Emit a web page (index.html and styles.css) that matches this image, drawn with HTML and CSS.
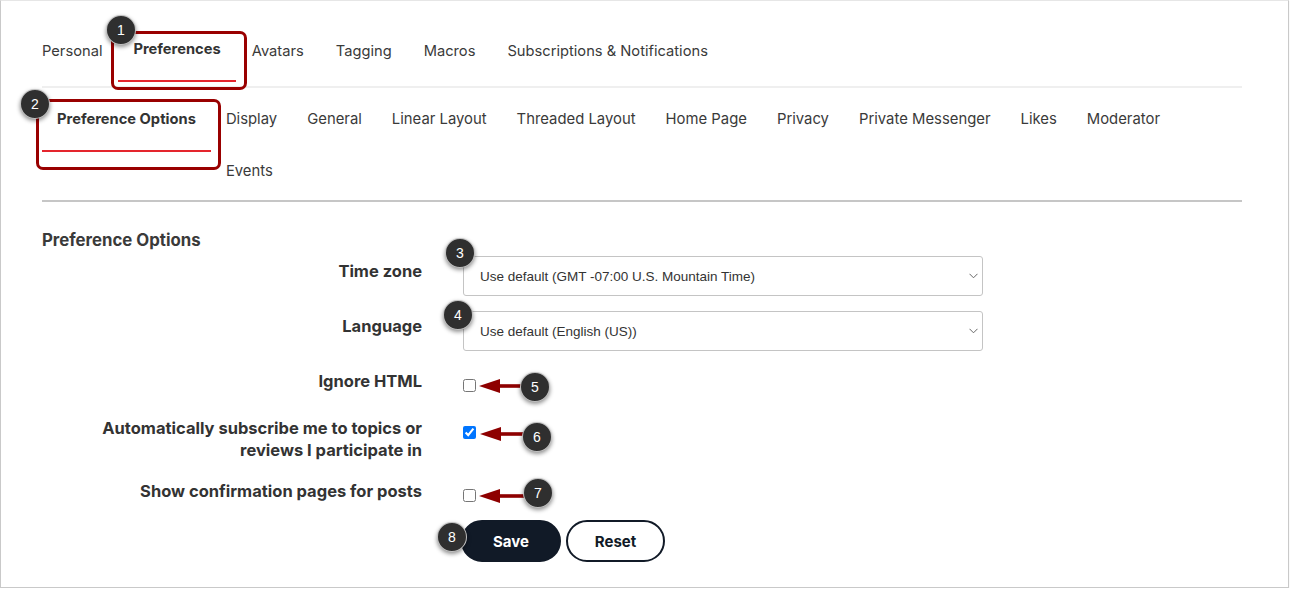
FILE: index.html
```html
<!DOCTYPE html>
<html lang="en">
<head>
    <meta charset="UTF-8">
    <meta name="viewport" content="width=device-width, initial-scale=1.0">
    <title>Preferences</title>
    <link rel="stylesheet" href="styles.css">
</head>
<body>
<div class="frame">
    <ul class="tabs-main">
        <li class="tab">Personal</li>
        <li class="tab active">Preferences</li>
        <li class="tab">Avatars</li>
        <li class="tab">Tagging</li>
        <li class="tab">Macros</li>
        <li class="tab">Subscriptions &amp; Notifications</li>
    </ul>

    <div class="tabs-sub">
        <div class="sub-tab active">Preference Options</div>
        <ul class="sub-list">
            <li class="sub-tab">Display</li>
            <li class="sub-tab">General</li>
            <li class="sub-tab">Linear Layout</li>
            <li class="sub-tab">Threaded Layout</li>
            <li class="sub-tab">Home Page</li>
            <li class="sub-tab">Privacy</li>
            <li class="sub-tab">Private Messenger</li>
            <li class="sub-tab">Likes</li>
            <li class="sub-tab">Moderator</li>
            <li class="break"></li>
            <li class="sub-tab">Events</li>
        </ul>
    </div>

    <h3 class="section-title">Preference Options</h3>

    <div class="form-row">
        <label class="form-label" for="timezone">Time zone</label>
        <div class="select-wrap">
            <select id="timezone">
                <option>Use default (GMT -07:00 U.S. Mountain Time)</option>
            </select>
            <svg class="chevron" width="9" height="6" viewBox="0 0 9 6"><path d="M0.5 0.8 L4.5 4.8 L8.5 0.8" fill="none" stroke="#666" stroke-width="1"/></svg>
        </div>
    </div>

    <div class="form-row">
        <label class="form-label" for="language">Language</label>
        <div class="select-wrap">
            <select id="language">
                <option>Use default (English (US))</option>
            </select>
            <svg class="chevron" width="9" height="6" viewBox="0 0 9 6"><path d="M0.5 0.8 L4.5 4.8 L8.5 0.8" fill="none" stroke="#666" stroke-width="1"/></svg>
        </div>
    </div>

    <div class="form-row check-row">
        <label class="form-label" for="ignoreHtml">Ignore HTML</label>
        <div><input type="checkbox" id="ignoreHtml"></div>
    </div>

    <div class="form-row check-row">
        <label class="form-label" for="autoSub">Automatically subscribe me to topics or<br>reviews I participate in</label>
        <div><input type="checkbox" id="autoSub" checked></div>
    </div>

    <div class="form-row check-row">
        <label class="form-label" for="confirmPages">Show confirmation pages for posts</label>
        <div><input type="checkbox" id="confirmPages"></div>
    </div>

    <div class="form-actions">
        <button class="btn btn-save">Save</button>
        <button class="btn btn-reset">Reset</button>
    </div>

    <!-- callouts -->
    <div class="callout-box box1"></div>
    <div class="callout-box box2"></div>

    <svg class="arrow arrow5" width="52" height="16" viewBox="0 0 52 16"><polygon points="0,8 21,1 21,15"/><rect x="19" y="6.2" width="33" height="3.6"/></svg>
    <svg class="arrow arrow6" width="52" height="16" viewBox="0 0 52 16"><polygon points="0,8 21,1 21,15"/><rect x="19" y="6.2" width="33" height="3.6"/></svg>
    <svg class="arrow arrow7" width="52" height="16" viewBox="0 0 52 16"><polygon points="0,8 21,1 21,15"/><rect x="19" y="6.2" width="33" height="3.6"/></svg>

    <div class="marker m1">1</div>
    <div class="marker m2">2</div>
    <div class="marker m3">3</div>
    <div class="marker m4">4</div>
    <div class="marker m5">5</div>
    <div class="marker m6">6</div>
    <div class="marker m7">7</div>
    <div class="marker m8">8</div>
</div>
</body>
</html>
```

FILE: styles.css
```css
body {
    margin: 0;
    padding: 0;
    background-color: #fff;
    font-family: Inter, Lato, Arial, sans-serif;
    color: #3a3a3a;
}

.frame {
    position: relative;
    box-sizing: border-box;
    width: 1289px;
    height: 588px;
    padding: 0 46px 0 41px;
    border: 1px solid #c9c9c9;
    border-top-color: #e6e6e6;
    box-shadow: 0 1px 1px rgba(0, 0, 0, 0.12);
    overflow: hidden;
}

/* top tabs */
.tabs-main {
    display: flex;
    list-style: none;
    margin: 0;
    padding: 40px 0 4px;
    border-bottom: 2px solid #efefef;
}

.tab {
    padding: 0 16px 19px;
    font-size: 14.7px;
    line-height: 20px;
    border-bottom: 2px solid transparent;
}

.tab:first-child {
    padding-left: 0;
}

.tab.active,
.sub-tab.active {
    font-weight: 700;
    color: #333;
    border-bottom: 2px solid #e4252d;
}

.tab.active {
    margin-top: -2px;
    padding: 0 15px 21px;
}

/* second level tabs */
.tabs-sub {
    display: flex;
    align-items: flex-start;
    padding-bottom: 8px;
    border-bottom: 2px solid #c6c6c6;
}

.sub-list {
    display: flex;
    flex-wrap: wrap;
    flex: 1;
    list-style: none;
    margin: 0;
    padding: 0;
}

.sub-tab {
    padding: 21px 15px 11px;
    font-size: 14.85px;
    line-height: 20px;
}

.sub-tab.active {
    padding-bottom: 21px;
    font-size: 14.7px;
}

.break {
    flex-basis: 100%;
    height: 0;
}

.section-title {
    margin: 28px 0 6px;
    font-size: 16.8px;
    line-height: 20px;
    font-weight: 700;
    color: #3a3a3a;
}

/* form */
.form-row {
    display: grid;
    grid-template-columns: 380px 520px;
    column-gap: 41px;
    align-items: start;
    margin-bottom: 15px;
}

.check-row {
    min-height: 32px;
}

.form-label {
    padding-top: 4px;
    text-align: right;
    font-size: 16.5px;
    line-height: 22px;
    font-weight: 700;
    color: #333;
}

.select-wrap {
    position: relative;
}

select {
    -webkit-appearance: none;
    appearance: none;
    width: 100%;
    height: 40px;
    padding: 0 30px 0 16px;
    border: 1px solid #c4c4c4;
    border-radius: 3px;
    background-color: #fff;
    font-family: "Liberation Sans", Arial, sans-serif;
    font-size: 13.5px;
    color: #333;
}

.chevron {
    position: absolute;
    right: 5px;
    top: 17px;
}

input[type="checkbox"] {
    width: 13px;
    height: 13px;
    margin: 13px 0 0;
}

.form-actions {
    display: flex;
    gap: 5px;
    padding-left: 419px;
    margin-top: -3px;
}

.btn {
    box-sizing: border-box;
    width: 100px;
    height: 42px;
    border: 2px solid #111a27;
    border-radius: 21px;
    font-family: Inter, Lato, Arial, sans-serif;
    font-size: 15px;
    font-weight: 700;
    cursor: pointer;
}

.btn-save {
    background-color: #111a27;
    color: #fff;
}

.btn-reset {
    width: 99px;
    background-color: #fff;
    color: #111a27;
}

/* annotation callouts */
.callout-box {
    position: absolute;
    box-sizing: border-box;
    border: 3px solid #990000;
    border-radius: 7px;
}

.box1 {
    left: 110px;
    top: 30px;
    width: 136px;
    height: 59px;
}

.box2 {
    left: 35px;
    top: 98px;
    width: 185px;
    height: 71px;
}

.arrow {
    position: absolute;
    fill: #8e0000;
}

.arrow5 { left: 478px; top: 377px; }
.arrow6 { left: 479px; top: 425px; }
.arrow7 { left: 478px; top: 487px; }

.marker {
    position: absolute;
    box-sizing: border-box;
    width: 30px;
    height: 30px;
    border: 1px solid rgba(255, 255, 255, 0.7);
    border-radius: 50%;
    background-color: #2f2f2f;
    color: #fff;
    font-family: "Liberation Sans", Arial, sans-serif;
    font-size: 14px;
    line-height: 28px;
    text-align: center;
    box-shadow: 0 2px 4px rgba(0, 0, 0, 0.45);
}

.m1 { left: 105px; top: 14px; }
.m2 { left: 19px; top: 88px; }
.m3 { left: 444px; top: 237px; }
.m4 { left: 442px; top: 299px; }
.m5 { left: 519px; top: 371px; }
.m6 { left: 521px; top: 421px; }
.m7 { left: 522px; top: 477px; }
.m8 { left: 436px; top: 521px; }
```
